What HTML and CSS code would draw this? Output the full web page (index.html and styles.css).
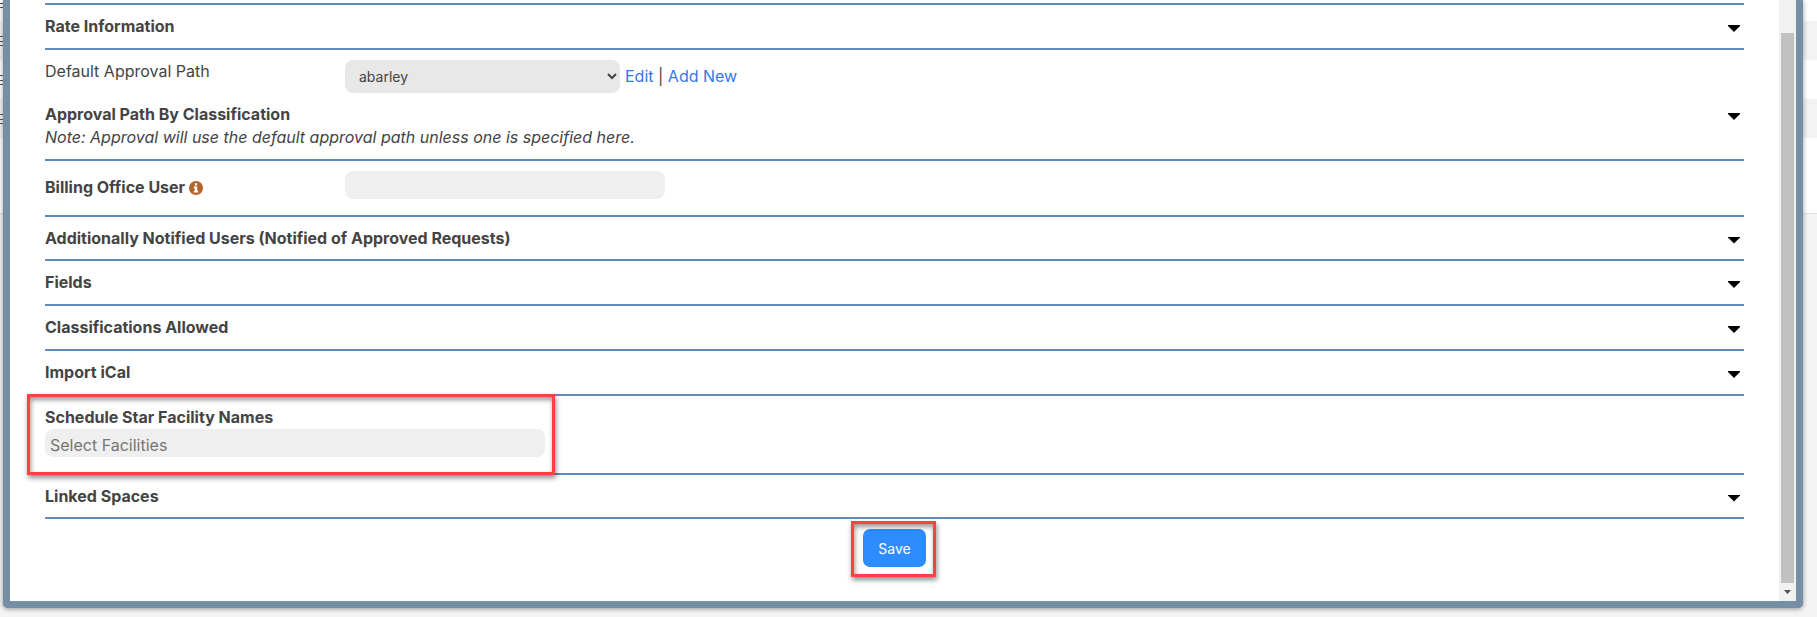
FILE: index.html
```html
<!DOCTYPE html>
<html lang="en">

<head>
  <meta charset="UTF-8">
  <meta name="viewport" content="width=device-width, initial-scale=1.0">
  <title>Edit Space</title>
  <link rel="stylesheet" href="styles.css">
</head>

<body>
  <!-- list page behind the dialog -->
  <div class="backdrop">
    <div class="list-row"><span class="grip"></span></div>
    <div class="list-row shaded"><span class="grip"></span></div>
    <div class="list-row"><span class="grip"></span></div>
    <div class="list-row shaded"><span class="grip"></span></div>
    <div class="list-row last"></div>
    <div class="list-row footer-row"></div>
  </div>

  <div class="modal" role="dialog" aria-label="Edit Space">
    <form class="modal-content">
      <div class="section first">
        <h3 class="section-title">Rate Information</h3>
        <button type="button" class="toggle" aria-label="Toggle Rate Information"></button>
      </div>

      <div class="field-row">
        <label class="field-label" for="approval-path">Default Approval Path</label>
        <div class="field-value">
          <select id="approval-path" class="select">
            <option>abarley</option>
          </select>
          <span class="links"><a href="#">Edit</a> | <a href="#">Add New</a></span>
        </div>
      </div>

      <div class="section with-note">
        <div>
          <h3 class="section-title">Approval Path By Classification</h3>
          <p class="note">Note: Approval will use the default approval path unless one is specified here.</p>
        </div>
        <button type="button" class="toggle" aria-label="Toggle Approval Path By Classification"></button>
      </div>

      <div class="field-row billing">
        <label class="field-label strong" for="billing-user">Billing Office User
          <svg class="info-icon" viewBox="0 0 14 14" aria-hidden="true">
            <circle cx="7" cy="7" r="7" fill="#b5622d" />
            <path d="M5.800 2.200h2.400v2.200H5.800zM4.800 5.600h3.400v4.200h1V11.400H4.800V9.800h1V7.200h-1z" fill="#fff" />
          </svg>
        </label>
        <div class="field-value">
          <input type="text" id="billing-user" class="text-input">
        </div>
      </div>

      <div class="section short">
        <h3 class="section-title">Additionally Notified Users (Notified of Approved Requests)</h3>
        <button type="button" class="toggle" aria-label="Toggle Additionally Notified Users"></button>
      </div>
      <div class="section">
        <h3 class="section-title">Fields</h3>
        <button type="button" class="toggle" aria-label="Toggle Fields"></button>
      </div>
      <div class="section">
        <h3 class="section-title">Classifications Allowed</h3>
        <button type="button" class="toggle" aria-label="Toggle Classifications Allowed"></button>
      </div>
      <div class="section">
        <h3 class="section-title">Import iCal</h3>
        <button type="button" class="toggle" aria-label="Toggle Import iCal"></button>
      </div>

      <div class="facilities">
        <label class="section-title" for="facilities">Schedule Star Facility Names</label>
        <input type="text" id="facilities" class="text-input" placeholder="Select Facilities">
        <span class="highlight"></span>
      </div>

      <div class="section short">
        <h3 class="section-title">Linked Spaces</h3>
        <button type="button" class="toggle" aria-label="Toggle Linked Spaces"></button>
      </div>

      <div class="actions">
        <div class="save-wrap">
          <button type="submit" class="save">Save</button>
          <span class="highlight"></span>
        </div>
      </div>
    </form>

    <div class="scrollbar">
      <div class="thumb"></div>
      <div class="scroll-down"></div>
    </div>
  </div>
</body>

</html>
```
FILE: styles.css
```css
:root {
  --line: #5f8bb8;
  --frame: #748fa6;
  --field: #efefef;
  --text: #444;
  --red: #ff4141;
}

* {
  margin: 0;
  padding: 0;
  box-sizing: border-box;
}

body {
  display: flex;
  min-height: 100vh;
  padding: 0 14px 9px 3px;
  background: #f4f4f4;
  color: var(--text);
  font-family: Inter, sans-serif;
  font-size: 16px;
  font-weight: 400;
  line-height: 23px;
  overflow: hidden;
}

/* page behind the dialog */
.backdrop {
  position: absolute;
  top: 0;
  left: 0;
  right: 0;
}

.list-row {
  display: flex;
  height: 39px;
  background: #fff;
}

.list-row:first-child {
  height: 21px;
}

.list-row.shaded {
  background: #f3f3f3;
}

.list-row.last {
  height: 76px;
  border-bottom: 1px solid #e2e2e2;
}

.list-row.footer-row {
  background: #f4f4f4;
}

.grip {
  width: 3px;
  height: 10px;
  margin-top: 15px;
  border-top: 1px solid #555;
  border-bottom: 1px solid #555;
  background: linear-gradient(#555, #555) center / 100% 1px no-repeat;
}

.list-row:first-child .grip {
  margin-top: -2px;
}

/* dialog */
.modal {
  position: relative;
  display: flex;
  flex: 1;
  background: #fff;
  border: 7px solid var(--frame);
  border-top: 0;
  border-radius: 0 0 5px 5px;
  box-shadow: 0 1px 5px rgba(0, 0, 0, 0.4);
}

.modal-content {
  flex: 1;
  padding: 3px 35px 0;
}

.section {
  display: flex;
  align-items: center;
  justify-content: space-between;
  height: 45px;
  border-bottom: 2px solid var(--line);
}

.section.first {
  height: 47px;
  border-top: 2px solid var(--line);
}

.section.short {
  height: 44px;
}

.section-title {
  font-size: 16px;
  font-weight: 700;
  line-height: 23px;
}

.toggle {
  width: 12px;
  height: 7px;
  margin: 4px 4px 0 0;
  border: 0;
  background: #000;
  clip-path: polygon(0 0, 100% 0, 100% 15%, 50% 100%, 0 15%);
}

.field-row {
  display: flex;
  padding-top: 10px;
}

.field-label {
  width: 300px;
}

.field-value {
  display: flex;
  align-items: center;
  gap: 5px;
}

.select {
  width: 275px;
  height: 33px;
  padding-left: 10px;
  border: 0;
  border-radius: 8px;
  background: #e8e8e8;
  color: var(--text);
  font: 400 14px Inter, sans-serif;
}

a {
  color: #3478e5;
  text-decoration: none;
}

.section.with-note {
  height: 68px;
}

.section.with-note .toggle {
  align-self: flex-start;
  margin-top: 20px;
}

.note {
  font-style: italic;
}

.field-row.billing {
  height: 56px;
  border-bottom: 2px solid var(--line);
}

.strong {
  padding-top: 5px;
  font-weight: 700;
}

.info-icon {
  width: 14px;
  height: 14px;
  vertical-align: -2px;
}

.text-input {
  width: 320px;
  height: 28px;
  padding: 4px 5px 0;
  border: 0;
  border-radius: 8px;
  background: var(--field);
  color: var(--text);
  font: 400 16px Inter, sans-serif;
}

.text-input::placeholder {
  color: #757575;
}

.billing .field-value {
  align-items: flex-start;
}

.facilities {
  position: relative;
  display: flex;
  flex-direction: column;
  height: 79px;
  padding-top: 10px;
  border-bottom: 2px solid var(--line);
}

.facilities .text-input {
  width: 500px;
}

/* red callout frames */
.highlight {
  position: absolute;
  border: 3px solid var(--red);
  box-shadow: 1px 3px 5px rgba(0, 0, 0, 0.45), inset 1px 3px 5px rgba(0, 0, 0, 0.4);
  pointer-events: none;
}

.facilities .highlight {
  top: -2px;
  left: -18px;
  width: 528px;
  height: 81px;
}

.actions {
  display: flex;
  justify-content: center;
  padding: 10px 0;
}

.save-wrap {
  position: relative;
}

.save {
  display: block;
  width: 63px;
  height: 38px;
  border: 0;
  border-radius: 7px;
  background: #2d8cff;
  color: #fff;
  font: 400 14px Inter, sans-serif;
}

.save-wrap .highlight {
  top: -8px;
  left: -12px;
  width: 85px;
  height: 56px;
}

/* scrollbar */
.scrollbar {
  display: flex;
  flex-direction: column;
  width: 17px;
  padding: 33px 2px 0;
  background: #f1f1f1;
}

.thumb {
  flex: 1;
  background: #c1c1c1;
}

.scroll-down {
  width: 7px;
  height: 4px;
  margin: 7px auto;
  background: #505050;
  clip-path: polygon(0 0, 100% 0, 50% 100%);
}
```
